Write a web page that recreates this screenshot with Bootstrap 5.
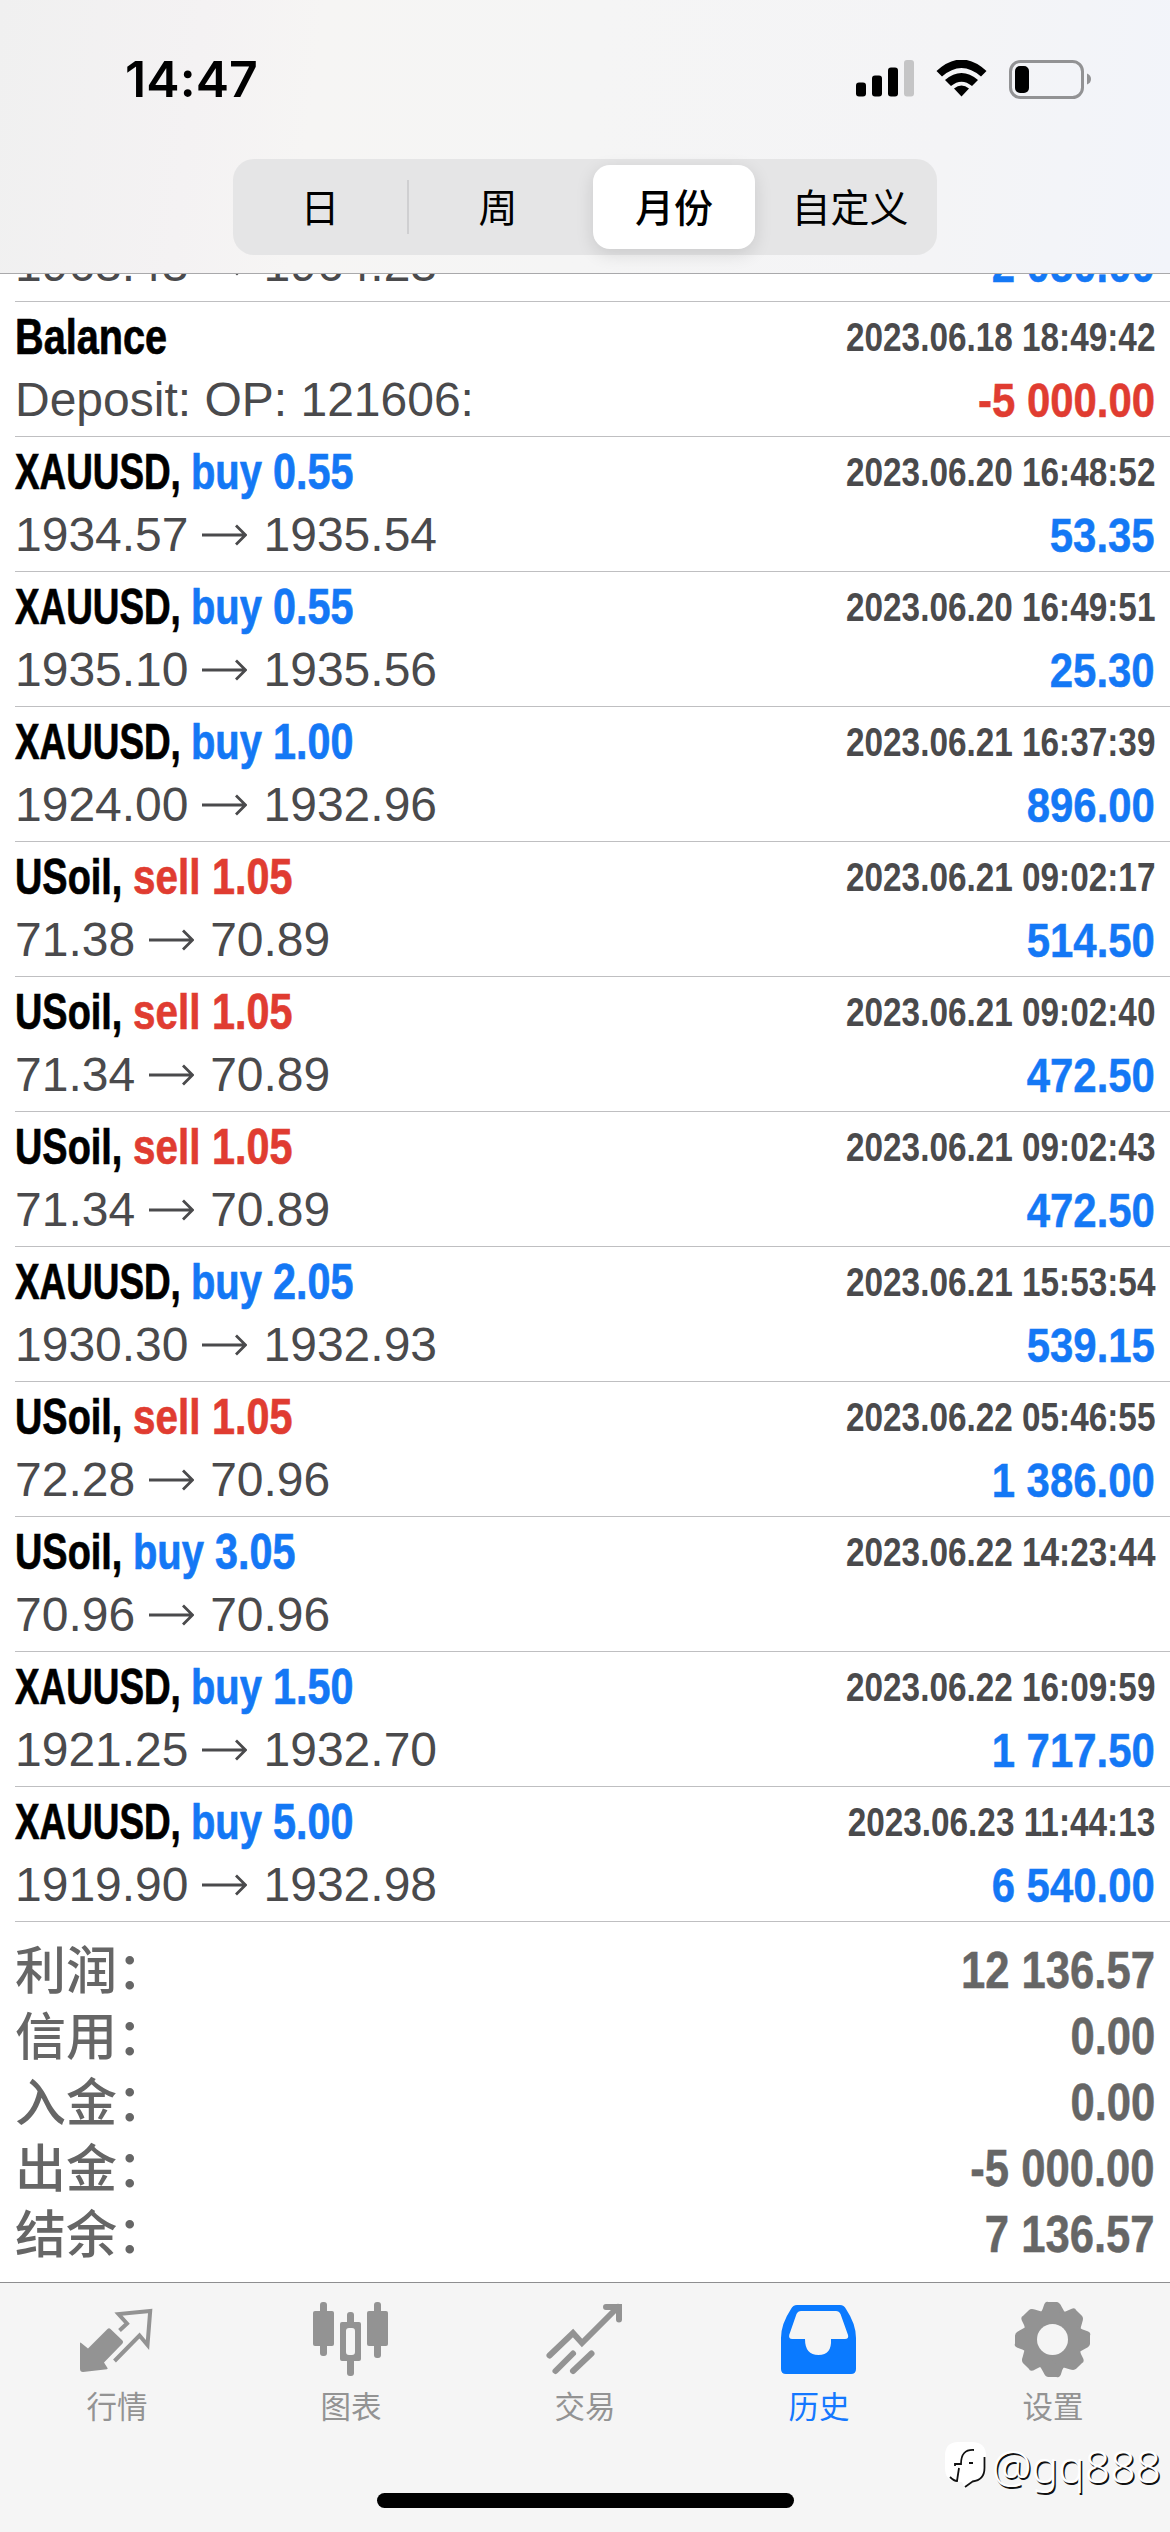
<!DOCTYPE html>
<html lang="zh-CN">
<head>
<meta charset="utf-8">
<meta name="viewport" content="width=device-width, initial-scale=1">
<title>历史</title>
<link href="https://cdn.jsdelivr.net/npm/bootstrap@5.3.0/dist/css/bootstrap.min.css" rel="stylesheet">
<style>
  body { width: 1170px; height: 2532px; background: #fff; font-family: "Liberation Sans", "Noto Sans CJK SC", sans-serif; overflow: hidden; color: #000; }
  .top-area { height: 274px; z-index: 2; border-bottom: 1px solid #a9a9ab; background: linear-gradient(97deg, #f0f0f0 0, #f4f2f3 17%, #f6f5f4 27%, #f5f5f5 50%, #f4f4f6 80%, #f2f4fa 100%); }
  .status-row { height: 159px; padding: 0 79px 0 125px; }
  .clock { font: 600 50px/60px Inter, sans-serif; letter-spacing: .1px; margin-top: -2px; }
  .segments { width: 704px; height: 96px; margin-left: 233px; border-radius: 21px; background: #e5e5e6; font: 400 39px/80px "Noto Sans CJK SC", sans-serif; padding: 6px; }
  .seg { height: 84px; text-align: center; }
  .seg-on { background: #fff; border-radius: 17px; box-shadow: 0 5px 18px rgba(0,0,0,.12); font-weight: 500; }
  .seg-line { width: 2px; height: 54px; background: #cfcfd1; margin: 0 -6px 0 6px; }
  .seg-last { padding-left: 14px; }
  .history { margin-top: -107px; padding-left: 15px; }
  .deal { height: 135px; padding: 2px 15px 0 0; border-bottom: 1px solid #bfbfc1; }
  .line-a { height: 66px; line-height: 66px; font-size: 50px; font-weight: 700; }
  .line-b { height: 60px; line-height: 60px; font-size: 48px; color: #4a4a4c; }
  .sx { display: inline-block; white-space: pre; transform-origin: 0 50%; -webkit-text-stroke: .7px currentColor; }
  .w-gold { width: 176px; transform: scaleX(.737); }
  .w-oil { width: 118px; transform: scaleX(.758); }
  .w-bal { width: 152px; transform: scaleX(.793); }
  .w-buy { width: 82px; transform: scaleX(.798); }
  .w-sell { width: 79px; transform: scaleX(.808); }
  .w-vol { width: 80px; transform: scaleX(.826); }
  .up { color: #1478f5; }
  .down { color: #e03c31; }
  .stamp { font-size: 40px; color: #4a4a4c; white-space: pre; transform: scaleX(.833); transform-origin: 100% 50%; }
  .amount { font-size: 49px; font-weight: 700; white-space: pre; transform: scaleX(.855); transform-origin: 100% 50%; -webkit-text-stroke: .5px currentColor; }
  .arrow { width: 45px; height: 22px; margin: 0 16.5px 0 13.5px; }
  .totals { padding: 15px 15px 0 15px; color: #666; }
  .total-row { height: 66px; line-height: 68px; }
  .total-name { font: 500 51px/61px "Noto Sans CJK SC", sans-serif; }
  .total-row .amount { font-size: 51px; }
  .tabs-area { height: 250px; background: #f5f5f5; border-top: 1px solid #8e8e90; }
  .tab-item { width: 234px; height: 150px; padding-top: 17px; color: #939393; font: 400 30.5px/44px "Noto Sans CJK SC", sans-serif; }
  .tab-item svg { width: 80px; height: 80px; margin-bottom: 3px; }
  .tab-on { color: #1478ff; }
  .home-bar { width: 417px; height: 15px; border-radius: 8px; background: #000; margin: 60px auto 0; }
  .mark-by { right: 9px; bottom: 34px; font: 300 44.5px/64px "Noto Sans", sans-serif; color: #fff; text-shadow: 1.5px 1.5px 0 #111; height: 64px; }
  .mark-by svg { width: 44px; height: 50px; margin-right: 4px; }
</style>
</head>
<body class="d-flex flex-column position-relative">

<header class="top-area position-relative flex-shrink-0">
  <div class="status-row d-flex justify-content-between align-items-center">
    <span class="clock">14:47</span>
    <svg width="240" height="40" viewBox="0 0 240 40">
      <g transform="translate(0 -.5)">
        <rect x="5" y="23" width="10" height="14" rx="3"/><rect x="21" y="16" width="10" height="21" rx="3"/>
        <rect x="37" y="8" width="10" height="29" rx="3"/><rect x="53" y="0.500" width="10" height="36.500" rx="3" fill="#c5c5c6"/>
        <path d="M85.500 11.500q25-23 50 0l-5.500 5.500q-19.500-17-39 0zM94 20.500q16.500-14 33 0l-6 6q-10.500-8.500-21 0zM103 29q7.500-6 15 0l-7.500 8z"/>
        <rect x="159.500" y="2" width="72" height="36" rx="10" fill="none" stroke="#929294" stroke-width="3"/>
        <rect x="164" y="6.500" width="14" height="27" rx="5"/>
        <path d="M236 14q4 1.500 4 5.500t-4 5.500z" fill="#929294"/>
      </g>
    </svg>
  </div>
  <div class="segments d-flex align-items-center">
    <div class="seg" style="width:162px">日</div><div class="seg-line"></div><div class="seg" style="width:190px">周</div>
    <div class="seg seg-on" style="width:162px">月份</div><div class="seg seg-last flex-grow-1">自定义</div>
  </div>
</header>

<svg class="d-none"><symbol id="arr" viewBox="0 0 45 22"><path d="M0 11H43M34 1.500L43.500 11L34 20.500" fill="none" stroke="#4a4a4c" stroke-width="2.800"/></symbol></svg>

<main class="history flex-shrink-0">
  <section class="deal"><div class="line-a d-flex justify-content-between"></div>
    <div class="line-b d-flex justify-content-between"><div class="d-flex align-items-center">1963.43<svg class="arrow"><use href="#arr"/></svg>1964.23</div><span class="amount up">2 050.00</span></div></section>
  <section class="deal"><div class="line-a d-flex justify-content-between"><div class="d-flex"><span class="sx w-bal">Balance</span></div><span class="stamp">2023.06.18 18:49:42</span></div>
    <div class="line-b d-flex justify-content-between"><div>Deposit: OP: 121606:</div><span class="amount down">-5 000.00</span></div></section>
  <section class="deal"><div class="line-a d-flex justify-content-between"><div class="d-flex"><span class="sx w-gold">XAUUSD, </span><span class="sx w-buy up">buy </span><span class="sx w-vol up">0.55</span></div><span class="stamp">2023.06.20 16:48:52</span></div>
    <div class="line-b d-flex justify-content-between"><div class="d-flex align-items-center">1934.57<svg class="arrow"><use href="#arr"/></svg>1935.54</div><span class="amount up">53.35</span></div></section>
  <section class="deal"><div class="line-a d-flex justify-content-between"><div class="d-flex"><span class="sx w-gold">XAUUSD, </span><span class="sx w-buy up">buy </span><span class="sx w-vol up">0.55</span></div><span class="stamp">2023.06.20 16:49:51</span></div>
    <div class="line-b d-flex justify-content-between"><div class="d-flex align-items-center">1935.10<svg class="arrow"><use href="#arr"/></svg>1935.56</div><span class="amount up">25.30</span></div></section>
  <section class="deal"><div class="line-a d-flex justify-content-between"><div class="d-flex"><span class="sx w-gold">XAUUSD, </span><span class="sx w-buy up">buy </span><span class="sx w-vol up">1.00</span></div><span class="stamp">2023.06.21 16:37:39</span></div>
    <div class="line-b d-flex justify-content-between"><div class="d-flex align-items-center">1924.00<svg class="arrow"><use href="#arr"/></svg>1932.96</div><span class="amount up">896.00</span></div></section>
  <section class="deal"><div class="line-a d-flex justify-content-between"><div class="d-flex"><span class="sx w-oil">USoil, </span><span class="sx w-sell down">sell </span><span class="sx w-vol down">1.05</span></div><span class="stamp">2023.06.21 09:02:17</span></div>
    <div class="line-b d-flex justify-content-between"><div class="d-flex align-items-center">71.38<svg class="arrow"><use href="#arr"/></svg>70.89</div><span class="amount up">514.50</span></div></section>
  <section class="deal"><div class="line-a d-flex justify-content-between"><div class="d-flex"><span class="sx w-oil">USoil, </span><span class="sx w-sell down">sell </span><span class="sx w-vol down">1.05</span></div><span class="stamp">2023.06.21 09:02:40</span></div>
    <div class="line-b d-flex justify-content-between"><div class="d-flex align-items-center">71.34<svg class="arrow"><use href="#arr"/></svg>70.89</div><span class="amount up">472.50</span></div></section>
  <section class="deal"><div class="line-a d-flex justify-content-between"><div class="d-flex"><span class="sx w-oil">USoil, </span><span class="sx w-sell down">sell </span><span class="sx w-vol down">1.05</span></div><span class="stamp">2023.06.21 09:02:43</span></div>
    <div class="line-b d-flex justify-content-between"><div class="d-flex align-items-center">71.34<svg class="arrow"><use href="#arr"/></svg>70.89</div><span class="amount up">472.50</span></div></section>
  <section class="deal"><div class="line-a d-flex justify-content-between"><div class="d-flex"><span class="sx w-gold">XAUUSD, </span><span class="sx w-buy up">buy </span><span class="sx w-vol up">2.05</span></div><span class="stamp">2023.06.21 15:53:54</span></div>
    <div class="line-b d-flex justify-content-between"><div class="d-flex align-items-center">1930.30<svg class="arrow"><use href="#arr"/></svg>1932.93</div><span class="amount up">539.15</span></div></section>
  <section class="deal"><div class="line-a d-flex justify-content-between"><div class="d-flex"><span class="sx w-oil">USoil, </span><span class="sx w-sell down">sell </span><span class="sx w-vol down">1.05</span></div><span class="stamp">2023.06.22 05:46:55</span></div>
    <div class="line-b d-flex justify-content-between"><div class="d-flex align-items-center">72.28<svg class="arrow"><use href="#arr"/></svg>70.96</div><span class="amount up">1 386.00</span></div></section>
  <section class="deal"><div class="line-a d-flex justify-content-between"><div class="d-flex"><span class="sx w-oil">USoil, </span><span class="sx w-buy up">buy </span><span class="sx w-vol up">3.05</span></div><span class="stamp">2023.06.22 14:23:44</span></div>
    <div class="line-b d-flex justify-content-between"><div class="d-flex align-items-center">70.96<svg class="arrow"><use href="#arr"/></svg>70.96</div></div></section>
  <section class="deal"><div class="line-a d-flex justify-content-between"><div class="d-flex"><span class="sx w-gold">XAUUSD, </span><span class="sx w-buy up">buy </span><span class="sx w-vol up">1.50</span></div><span class="stamp">2023.06.22 16:09:59</span></div>
    <div class="line-b d-flex justify-content-between"><div class="d-flex align-items-center">1921.25<svg class="arrow"><use href="#arr"/></svg>1932.70</div><span class="amount up">1 717.50</span></div></section>
  <section class="deal"><div class="line-a d-flex justify-content-between"><div class="d-flex"><span class="sx w-gold">XAUUSD, </span><span class="sx w-buy up">buy </span><span class="sx w-vol up">5.00</span></div><span class="stamp">2023.06.23 11:44:13</span></div>
    <div class="line-b d-flex justify-content-between"><div class="d-flex align-items-center">1919.90<svg class="arrow"><use href="#arr"/></svg>1932.98</div><span class="amount up">6 540.00</span></div></section>
</main>

<section class="totals">
  <div class="total-row d-flex justify-content-between"><span class="total-name">利润：</span><span class="amount">12 136.57</span></div>
  <div class="total-row d-flex justify-content-between"><span class="total-name">信用：</span><span class="amount">0.00</span></div>
  <div class="total-row d-flex justify-content-between"><span class="total-name">入金：</span><span class="amount">0.00</span></div>
  <div class="total-row d-flex justify-content-between"><span class="total-name">出金：</span><span class="amount">-5 000.00</span></div>
  <div class="total-row d-flex justify-content-between"><span class="total-name">结余：</span><span class="amount">7 136.57</span></div>
</section>

<footer class="tabs-area mt-auto flex-shrink-0">
  <nav class="d-flex">
    <div class="tab-item d-flex flex-column align-items-center">
      <svg viewBox="0 0 80 80"><path d="M3 43.500q0-1.500 1.200-.500L11 48.500L30.500 29q1.500-1.500 3 0L45.500 40.500q1.200 1.500 0 3L27 62.500L30.500 68q.5 1-.5 1.200L6 72q-3 0-3-3z" fill="currentColor"/><path d="M42.500 30.500L50 23.500L41.500 14L73.200 11L70.500 45L62.500 35.500L37.500 61" fill="none" stroke="currentColor" stroke-width="4"/></svg>
      行情</div>
    <div class="tab-item d-flex flex-column align-items-center">
      <svg viewBox="0 0 80 80" fill="currentColor"><rect x="9" y="2" width="7" height="54" rx="3"/><rect x="2" y="11" width="21" height="35" rx="2"/><rect x="63" y="2" width="7" height="56" rx="3"/><rect x="56" y="11" width="21" height="35" rx="2"/><rect x="36" y="12" width="7" height="14" rx="3"/><rect x="36" y="57" width="7" height="19" rx="3"/><path fill-rule="evenodd" d="M31 22h17q2 0 2 2v35q0 2-2 2H31q-2 0-2-2V24q0-2 2-2zm7 6q-3 0-3 3v21q0 3 3 3h3q3 0 3-3V31q0-3-3-3z"/></svg>
      图表</div>
    <div class="tab-item d-flex flex-column align-items-center">
      <svg viewBox="0 0 80 80" fill="none" stroke="currentColor" stroke-width="6" stroke-linecap="round"><path d="M4.500 55.500L28 33L37 43L73 7"/><path d="M61 7H74V19.500"/><path d="M10.500 71L28 53.500"/><path d="M28 71L46.500 53.500"/></svg>
      交易</div>
    <div class="tab-item tab-on d-flex flex-column align-items-center">
      <svg viewBox="0 0 80 80"><path fill="#0a7aff" fill-rule="evenodd" d="M18 5H61q4 0 6 4Q77 24 77 38V69q0 5-5 5H7q-5 0-5-5V38Q2 24 12 9q2-4 6-4zM22 11q-3 0-4.500 3L10.200 35q-.7 4 3 4H26q0 16 13.500 16T52 39H66q4 0 3-4L61.500 14Q60 11 57 11z"/></svg>
      历史</div>
    <div class="tab-item d-flex flex-column align-items-center">
      <svg viewBox="0 0 80 80"><g fill="currentColor" transform="translate(39.500 39.500)"><path id="tooth" d="M-15-24Q-10.500-27-9-33T-4-37.500H4Q7-37.500 9-33T15-24V24Q10.500 27 9 33T4 37.500H-4Q-7 37.500-9 33T-15 24z"/><use href="#tooth" transform="rotate(45)"/><use href="#tooth" transform="rotate(90)"/><use href="#tooth" transform="rotate(135)"/></g><circle cx="39.500" cy="39.500" r="15.500" fill="#f5f5f5"/></svg>
      设置</div>
  </nav>
  <div class="home-bar"></div>
</footer>

<div class="mark-by position-absolute d-flex align-items-center">
  <svg viewBox="0 0 44 50"><path d="M14 1h14q14 0 14 14v12q0 13-13 14l-8 7-3-7h-5Q1 40 1 27V15Q1 1 14 1z" fill="#fff"/><path d="M40.500 16v11q0 12-12 13.500L21 46M6 36q4 4 7 4L15 27M11 25v-2h6q0-15 13-14M25 22h4" fill="none" stroke="#111" stroke-width="1.800"/></svg><span>@gq888</span>
</div>

<script src="https://cdn.jsdelivr.net/npm/bootstrap@5.3.0/dist/js/bootstrap.bundle.min.js"></script>
</body>
</html>
